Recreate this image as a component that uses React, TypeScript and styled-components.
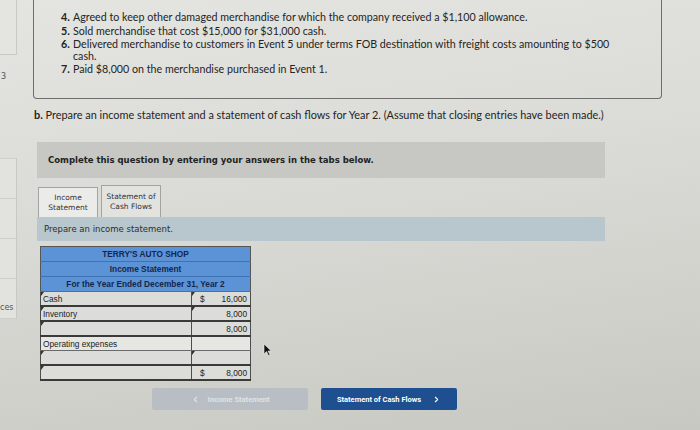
import React from "react";
import styled, { createGlobalStyle } from "styled-components";
import { ChevronLeft, ChevronRight } from "lucide-react";

const Global = createGlobalStyle`
  html, body { margin: 0; padding: 0; }
  body { width: 700px; height: 430px; overflow: hidden; background: #d8d8d3; }
`;

const Page = styled.div`
  position: relative;
  width: 700px;
  height: 430px;
  overflow: hidden;
  display: flex;
  background: linear-gradient(172deg, #e4e4e0 0%, #dbdcd7 40%, #d1d1cc 75%, #c8c8c2 100%);
  font-family: Lato, "Open Sans", sans-serif;
  color: #242424;
`;

const Sidebar = styled.aside`
  width: 17px;
  flex: none;
  display: flex;
  flex-direction: column;
  font-family: "DejaVu Sans", sans-serif;
  font-size: 8px;
  color: #555;
`;

const SideBox = styled.div`
  height: 55px;
  box-sizing: border-box;
  background: #e4e4e0;
  border-right: 1px solid #c9c9c4;
  border-bottom: 1px solid #c9c9c4;
`;

const SideLabel = styled.div`
  margin-top: 16px;
  height: 12px;
  line-height: 12px;
  padding-left: 1px;
`;

const SideList = styled.div`
  margin-top: 75px;
  display: flex;
  flex-direction: column;
  background: #e2e2de;
  border-right: 1px solid #c9c9c4;
  border-top: 1px solid #d0d0cb;
`;

const SideCell = styled.div`
  height: 40px;
  box-sizing: border-box;
  border-bottom: 1px solid #cfcfca;
  display: flex;
  align-items: flex-end;
  padding-bottom: 6px;
  overflow: hidden;
  white-space: nowrap;
`;

const Main = styled.main`
  flex: 1;
  padding-left: 16px;
  display: flex;
  flex-direction: column;
`;

const ProblemBox = styled.section`
  width: 629px;
  height: 99px;
  box-sizing: border-box;
  border: 1px solid #6e6e6c;
  border-top: none;
  border-radius: 0 0 4px 4px;
  padding: 11px 0 0 27px;
`;

const List = styled.ol`
  list-style: none;
  margin: 0;
  padding: 0;
  font-size: 10.7px;
  line-height: 11.5px;
`;

const Item = styled.li`
  display: flex;
  margin-bottom: 2px;
  white-space: nowrap;
`;

const Num = styled.span`
  font-weight: 700;
  width: 12px;
  flex: none;
`;

const QuestionB = styled.p`
  margin: 9px 0 0 1px;
  font-size: 10.9px;
  line-height: 14px;
  white-space: nowrap;
`;

const Bold = styled.b`
  font-weight: 700;
`;

const Instruction = styled.div`
  margin: 20px 0 0 4px;
  width: 568px;
  height: 36px;
  box-sizing: border-box;
  background: #c7c8c3;
  display: flex;
  align-items: center;
  padding-left: 11px;
  font-family: "DejaVu Sans", Verdana, sans-serif;
  font-weight: 700;
  font-size: 8.5px;
  color: #222;
`;

const Tabs = styled.div`
  margin: 7px 0 0 5px;
  display: flex;
  align-items: flex-end;
  gap: 3px;
`;

const Tab = styled.div<{ $active?: boolean }>`
  width: 60px;
  height: ${(p) => (p.$active ? 30 : 32)}px;
  box-sizing: border-box;
  border: 1px solid #a3a3a1;
  border-bottom: none;
  background: ${(p) => (p.$active ? "#ebebe9" : "#e2e2df")};
  display: flex;
  align-items: center;
  justify-content: center;
  text-align: center;
  font-family: "DejaVu Sans", Verdana, sans-serif;
  font-size: 7.5px;
  line-height: 10px;
  color: #333;
`;

const Bar = styled.div`
  margin-left: 4px;
  width: 568px;
  height: 24px;
  box-sizing: border-box;
  background: #b8c7ce;
  display: flex;
  align-items: center;
  padding-left: 7px;
  font-family: "DejaVu Sans", Verdana, sans-serif;
  font-size: 8.5px;
  color: #2d2d2d;
`;

const Sheet = styled.table`
  margin: 5px 0 0 7px;
  width: 211px;
  border-collapse: collapse;
  font-family: "Liberation Sans", Arial, sans-serif;
  font-size: 8.3px;
  color: #222;
  border: 1px solid #555;
`;

const HeadCell = styled.th`
  height: 14px;
  padding: 0;
  background: #5c93d6;
  border-bottom: 1px solid #3f72b3;
  text-align: center;
  font-weight: 700;
  font-size: 8.3px;
  color: #15264b;
`;

const Cell = styled.td<{ $input?: boolean; $mark?: boolean; $w?: number }>`
  position: relative;
  height: 13px;
  padding: 0 3px 0 2px;
  width: ${(p) => (p.$w ? `${p.$w}px` : "auto")};
  background: ${(p) => (p.$input ? "#dcdcd9" : "#e6e6e3")};
  border: 1px solid #4d4d4d;
  border-bottom: ${(p) => (p.$input ? "2px solid #3a3a3a" : "1px solid #6a6a6a")};
  &::before {
    content: "";
    display: ${(p) => (p.$mark ? "block" : "none")};
    position: absolute;
    left: 0;
    top: 0;
    width: 0;
    height: 0;
    border-top: 4px solid #333;
    border-right: 3px solid transparent;
  }
`;

const Amount = styled.div`
  display: flex;
  justify-content: space-between;
  padding-left: 6px;
`;

const Buttons = styled.div`
  margin: 7px 0 0 119px;
  display: flex;
  gap: 13px;
`;

const NavButton = styled.button<{ $primary?: boolean; $w: number }>`
  width: ${(p) => p.$w}px;
  height: 22px;
  border: none;
  border-radius: 2px;
  background: ${(p) => (p.$primary ? "#1d4f91" : "#b9bec4")};
  color: ${(p) => (p.$primary ? "#ffffff" : "#dfe2e6")};
  font-family: Roboto, "Liberation Sans", sans-serif;
  font-weight: 700;
  font-size: 7.5px;
  display: flex;
  align-items: center;
  justify-content: center;
  gap: ${(p) => (p.$primary ? 11 : 8)}px;
  padding: 0;
`;

const Cursor = styled.svg`
  position: absolute;
  left: 263px;
  top: 343px;
`;

type Row = {
  label?: string;
  leftInput?: boolean;
  rightInput?: boolean;
  dollar?: boolean;
  value?: string;
  rightMark?: boolean;
};

const rows: Row[] = [
  { label: "Cash", leftInput: true, rightInput: true, rightMark: true, dollar: true, value: "16,000" },
  { label: "Inventory", leftInput: true, rightInput: true, rightMark: true, value: "8,000" },
  { leftInput: true, rightInput: true, value: "8,000" },
  { label: "Operating expenses" },
  { leftInput: true, rightInput: true, rightMark: true },
  { leftInput: true, rightInput: true, dollar: true, value: "8,000" },
];

export default function App() {
  return (
    <Page>
      <Global />
      <Sidebar>
        <SideBox />
        <SideLabel>3</SideLabel>
        <SideList>
          <SideCell />
          <SideCell />
          <SideCell />
          <SideCell>ces</SideCell>
        </SideList>
      </Sidebar>
      <Main>
        <ProblemBox>
          <List>
            <Item>
              <Num>4.</Num>
              <span>Agreed to keep other damaged merchandise for which the company received a $1,100 allowance.</span>
            </Item>
            <Item>
              <Num>5.</Num>
              <span>Sold merchandise that cost $15,000 for $31,000 cash.</span>
            </Item>
            <Item>
              <Num>6.</Num>
              <span>
                Delivered merchandise to customers in Event 5 under terms FOB destination with freight costs amounting to $500
                <br />
                cash.
              </span>
            </Item>
            <Item>
              <Num>7.</Num>
              <span>Paid $8,000 on the merchandise purchased in Event 1.</span>
            </Item>
          </List>
        </ProblemBox>
        <QuestionB>
          <Bold>b.</Bold> Prepare an income statement and a statement of cash flows for Year 2. (Assume that closing entries have been made.)
        </QuestionB>
        <Instruction>Complete this question by entering your answers in the tabs below.</Instruction>
        <Tabs>
          <Tab $active>
            Income
            <br />
            Statement
          </Tab>
          <Tab>
            Statement of
            <br />
            Cash Flows
          </Tab>
        </Tabs>
        <Bar>Prepare an income statement.</Bar>
        <Sheet>
          <thead>
            <tr>
              <HeadCell colSpan={2}>TERRY'S AUTO SHOP</HeadCell>
            </tr>
            <tr>
              <HeadCell colSpan={2}>Income Statement</HeadCell>
            </tr>
            <tr>
              <HeadCell colSpan={2}>For the Year Ended December 31, Year 2</HeadCell>
            </tr>
          </thead>
          <tbody>
            {rows.map((r, i) => (
              <tr key={i}>
                <Cell $w={145} $input={r.leftInput} $mark={r.leftInput}>
                  {r.label}
                </Cell>
                <Cell $input={r.rightInput} $mark={r.rightMark}>
                  <Amount>
                    <span>{r.dollar ? "$" : ""}</span>
                    <span>{r.value ?? ""}</span>
                  </Amount>
                </Cell>
              </tr>
            ))}
          </tbody>
        </Sheet>
        <Buttons>
          <NavButton $w={156} disabled>
            <ChevronLeft size={9} strokeWidth={3} />
            <span>Income Statement</span>
          </NavButton>
          <NavButton $w={136} $primary>
            <span>Statement of Cash Flows</span>
            <ChevronRight size={9} strokeWidth={3} />
          </NavButton>
        </Buttons>
      </Main>
      <Cursor width="9" height="13" viewBox="0 0 9 13">
        <path d="M1 1 L1 11 L3.5 8.5 L5.5 12.5 L7 11.8 L5 8 L8.2 8 Z" fill="#111" stroke="#eee" strokeWidth="0.6" />
      </Cursor>
    </Page>
  );
}
